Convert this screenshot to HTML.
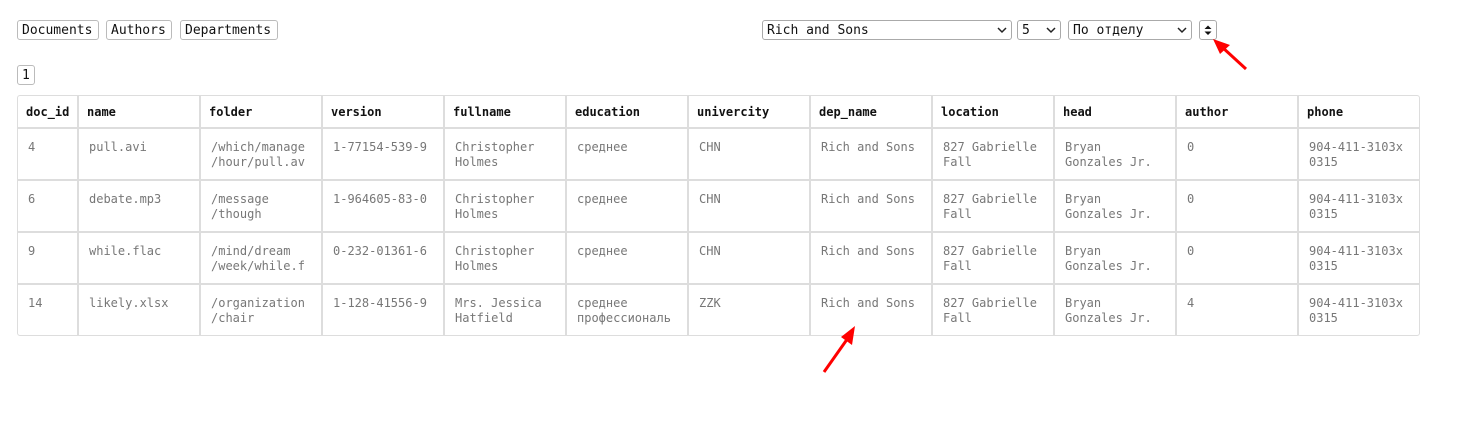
<!DOCTYPE html>
<html><head><meta charset="utf-8"><style>
body{margin:0;width:1471px;height:430px;background:#fff;font-family:"DejaVu Sans Mono","Liberation Mono",monospace;position:relative;overflow:hidden}
.btn{position:absolute;top:20px;height:18px;border:1px solid #bbb;border-radius:3px;font-size:13px;line-height:20px;padding:0 4px 0 4px;color:#111;box-sizing:content-box}
.sel{position:absolute;top:20px;height:18px;border:1px solid #aaa;border-radius:3px;font-size:13px;line-height:20px;padding:0 4px;color:#111}
.sel svg{position:absolute;right:4px;top:6px}
.t{position:absolute;left:17px;top:95px;width:1401px;height:239px;border:1px solid #ddd;border-radius:3px}
.c{position:absolute;font-size:12px;line-height:15px;color:#777;white-space:pre}
.h{position:absolute;font-size:12px;font-weight:bold;color:#111;line-height:15px}
.vl{position:absolute;top:0;width:2px;height:239px;background:#ddd}
.hl{position:absolute;left:0;width:1401px;height:2px;background:#ddd}
</style></head><body>
<div class="btn" style="left:17px;padding:0 4px 0 4px;width:72px">Documents</div>
<div class="btn" style="left:106px;width:56px">Authors</div>
<div class="btn" style="left:180px;width:88px">Departments</div>
<div class="sel" style="left:762px;width:240px">Rich and Sons<svg width="10" height="7"><path d="M1 1l4 4 4-4" stroke="#222" stroke-width="1.5" fill="none"/></svg></div>
<div class="sel" style="left:1017px;width:34px">5<svg width="10" height="7"><path d="M1 1l4 4 4-4" stroke="#222" stroke-width="1.5" fill="none"/></svg></div>
<div class="sel" style="left:1068px;width:114px">По отделу<svg width="10" height="7"><path d="M1 1l4 4 4-4" stroke="#222" stroke-width="1.5" fill="none"/></svg></div>
<div style="position:absolute;left:1199px;top:20px;width:16px;height:18px;border:1px solid #aaa;border-radius:3px"><svg width="16" height="18"><path d="M4.5 8L8 4.5 11.5 8z M4.5 10.5L8 14 11.5 10.5z" fill="#111"/></svg></div>
<div class="btn" style="left:17px;top:65px;padding:0 4px">1</div>
<div class="t">
<div class="hl" style="top:31px"></div><div class="hl" style="top:83px"></div><div class="hl" style="top:135px"></div><div class="hl" style="top:187px"></div>
<div class="vl" style="left:59px"></div><div class="vl" style="left:181px"></div><div class="vl" style="left:303px"></div><div class="vl" style="left:425px"></div><div class="vl" style="left:547px"></div><div class="vl" style="left:669px"></div><div class="vl" style="left:791px"></div><div class="vl" style="left:913px"></div><div class="vl" style="left:1035px"></div><div class="vl" style="left:1157px"></div><div class="vl" style="left:1279px"></div>
</div>
<div id="cells"></div>
<svg style="position:absolute;left:0;top:0" width="1471" height="430">
<line x1="1246" y1="69" x2="1222" y2="47" stroke="#f00" stroke-width="3"/><path d="M1213 39 L1230 45 L1220 54z" fill="#f00"/>
<line x1="824" y1="372" x2="848" y2="338" stroke="#f00" stroke-width="3"/><path d="M855 326 L852 345 L841 337z" fill="#f00"/>
</svg>
<script>
var L=[17,78,200,322,444,566,688,810,932,1054,1176,1298];
var H=["doc_id","name","folder","version","fullname","education","univercity","dep_name","location","head","author","phone"];
var R=[["4","pull.avi","/which/manage\n/hour/pull.av","1-77154-539-9","Christopher\nHolmes","среднее","CHN","Rich and Sons","827 Gabrielle\nFall","Bryan\nGonzales Jr.","0","904-411-3103x\n0315"],
["6","debate.mp3","/message\n/though","1-964605-83-0","Christopher\nHolmes","среднее","CHN","Rich and Sons","827 Gabrielle\nFall","Bryan\nGonzales Jr.","0","904-411-3103x\n0315"],
["9","while.flac","/mind/dream\n/week/while.f","0-232-01361-6","Christopher\nHolmes","среднее","CHN","Rich and Sons","827 Gabrielle\nFall","Bryan\nGonzales Jr.","0","904-411-3103x\n0315"],
["14","likely.xlsx","/organization\n/chair","1-128-41556-9","Mrs. Jessica\nHatfield","среднее\nпрофессиональ","ZZK","Rich and Sons","827 Gabrielle\nFall","Bryan\nGonzales Jr.","4","904-411-3103x\n0315"]];
var s="";
for(var i=0;i<12;i++){s+='<div class="h" style="left:'+(L[i]+9)+'px;top:105px">'+H[i]+'</div>';
for(var r=0;r<4;r++)s+='<div class="c" style="left:'+(L[i]+11)+'px;top:'+(140+52*r)+'px">'+R[r][i]+'</div>';}
document.getElementById("cells").innerHTML=s;
</script>
</body></html>
